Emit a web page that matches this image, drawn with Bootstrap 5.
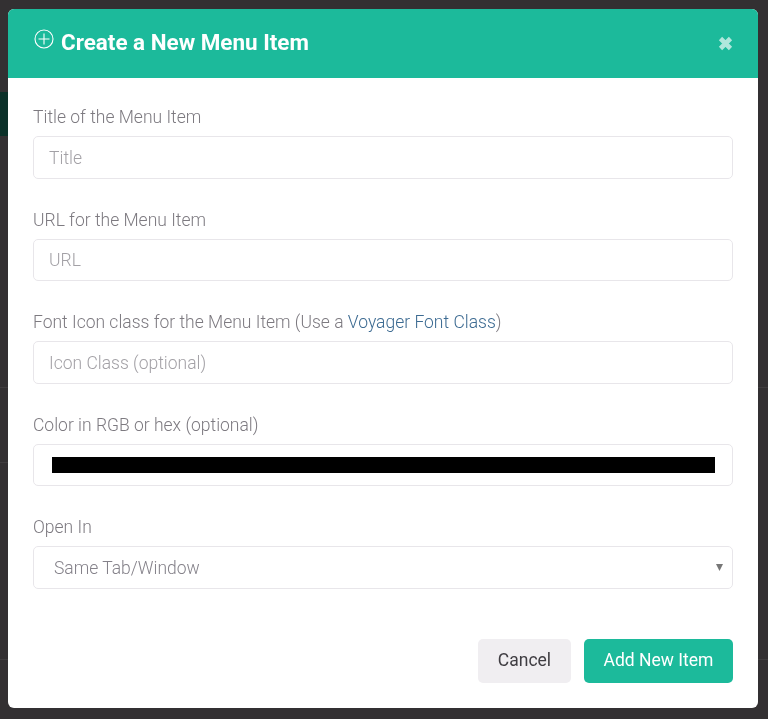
<!DOCTYPE html>
<html lang="en">
<head>
<meta charset="utf-8">
<title>Create a New Menu Item</title>
<link href="https://cdn.jsdelivr.net/npm/bootstrap@5.3.0/dist/css/bootstrap.min.css" rel="stylesheet">
<style>
html,body{height:100%;}
body{background:#333032;font-family:Roboto,"Liberation Sans",sans-serif;overflow:hidden;position:relative;}
.page-shade{position:absolute;left:0;top:92px;width:8px;height:44px;background:#0b3028;}
.page-rule{position:absolute;height:1px;background:#403d3f;}
.rule-a{left:0;width:8px;top:387px;}
.rule-b{left:0;width:8px;top:462px;}
.rule-c{left:0;width:8px;top:659px;}
.rule-d{left:758px;width:10px;top:387px;}
.rule-e{left:758px;width:10px;top:659px;}
.menu-shell{padding:9px 10px 11px 8px;height:719px;position:relative;}
.menu-dialog{height:699px;width:750px;border:0;border-radius:6px;overflow:hidden;background:#fff;will-change:transform;}
.menu-head{height:69px;background:#1cba9b;border:0;border-radius:0;padding:0 25px 0 26px;color:#fff;}
.menu-title{font-size:22.45px;font-weight:700;line-height:28px;color:#fff;margin:-4px 0 0;display:flex;align-items:center;}
.menu-title svg{margin:-5px 7px 0 0;}
.menu-close{background:none;border:0;padding:0;line-height:0;opacity:.65;margin-top:-1px;}
.menu-body{padding:27px 25px 0;}
.menu-group{height:102.5px;}
.menu-label{font-size:17.5px;font-weight:300;color:#7d7a80;line-height:24px;margin:0 0 7px;display:block;}
.menu-label a{color:#3d6b92;text-decoration:none;}
.menu-input{height:42.6px;font-size:17.5px;font-weight:300;border:1px solid #e8e6ea;border-radius:5px;padding:1px 15px 0;color:#7d7a80;background-color:#fff;}
.menu-input::placeholder{color:#a3a1a6;opacity:1;}
.menu-swatch{padding:12px 17px 12px 18px;cursor:pointer;}
.menu-swatch::-webkit-color-swatch-wrapper{padding:0;}
.menu-swatch::-webkit-color-swatch{border:0;border-radius:0;background:#000;}
.menu-select{padding:1px 15px 0 20px;background-image:url("data:image/svg+xml,%3Csvg xmlns='http://www.w3.org/2000/svg' viewBox='0 0 7 7'%3E%3Cpath fill='%23777' d='M0 0h7L3.5 7z'/%3E%3C/svg%3E");background-size:7px 7px;background-position:right 9px center;color:#85828a;}
.menu-foot{margin:0 25px;padding-top:21px;gap:13px;}
.menu-btn{height:44px;font-size:17.5px;font-weight:400;line-height:1;border:0;border-radius:5px;display:flex;align-items:center;justify-content:center;padding:1px 0 0;}
.btn-quiet{width:93px;background:#f0eef1;color:#3f3d42;}
.btn-add{width:149px;background:#1cba9b;color:#fff;}
</style>
</head>
<body>
<div class="page-shade"></div>
<div class="page-rule rule-a"></div>
<div class="page-rule rule-b"></div>
<div class="page-rule rule-c"></div>
<div class="page-rule rule-d"></div>
<div class="page-rule rule-e"></div>
<div class="menu-shell">
  <div class="modal-content menu-dialog d-flex flex-column">
    <div class="modal-header menu-head d-flex align-items-center justify-content-between">
      <h4 class="menu-title">
        <svg width="20" height="20" viewBox="0 0 20 20" fill="none" stroke="#fff" stroke-width="1.1" aria-hidden="true"><circle cx="10" cy="10" r="9"/><path d="M10 4.5v11M4.5 10h11"/></svg>
        Create a New Menu Item
      </h4>
      <button type="button" class="menu-close" aria-label="Close">
        <svg width="15" height="15" viewBox="0 0 15 15" aria-hidden="true"><path d="M2.5 2.5l10 10M12.5 2.5l-10 10" stroke="#fff" stroke-width="4.6" fill="none"/></svg>
      </button>
    </div>
    <div class="modal-body menu-body flex-grow-0">
      <div class="menu-group">
        <label class="menu-label" for="f1">Title of the Menu Item</label>
        <input id="f1" class="form-control menu-input" type="text" placeholder="Title">
      </div>
      <div class="menu-group">
        <label class="menu-label" for="f2">URL for the Menu Item</label>
        <input id="f2" class="form-control menu-input" type="text" placeholder="URL">
      </div>
      <div class="menu-group">
        <label class="menu-label" for="f3">Font Icon class for the Menu Item (Use a <a href="#">Voyager Font Class</a>)</label>
        <input id="f3" class="form-control menu-input" type="text" placeholder="Icon Class (optional)">
      </div>
      <div class="menu-group">
        <label class="menu-label" for="f4">Color in RGB or hex (optional)</label>
        <input id="f4" class="form-control menu-input menu-swatch" type="color" value="#000000">
      </div>
      <div class="menu-group">
        <label class="menu-label" for="f5">Open In</label>
        <select id="f5" class="form-select menu-input menu-select">
          <option>Same Tab/Window</option>
          <option>New Tab/Window</option>
        </select>
      </div>
    </div>
    <div class="menu-foot d-flex justify-content-end">
      <button type="button" class="btn menu-btn btn-quiet">Cancel</button>
      <button type="button" class="btn menu-btn btn-add">Add New Item</button>
    </div>
  </div>
</div>
<script src="https://cdn.jsdelivr.net/npm/bootstrap@5.3.0/dist/js/bootstrap.bundle.min.js"></script>
</body>
</html>
